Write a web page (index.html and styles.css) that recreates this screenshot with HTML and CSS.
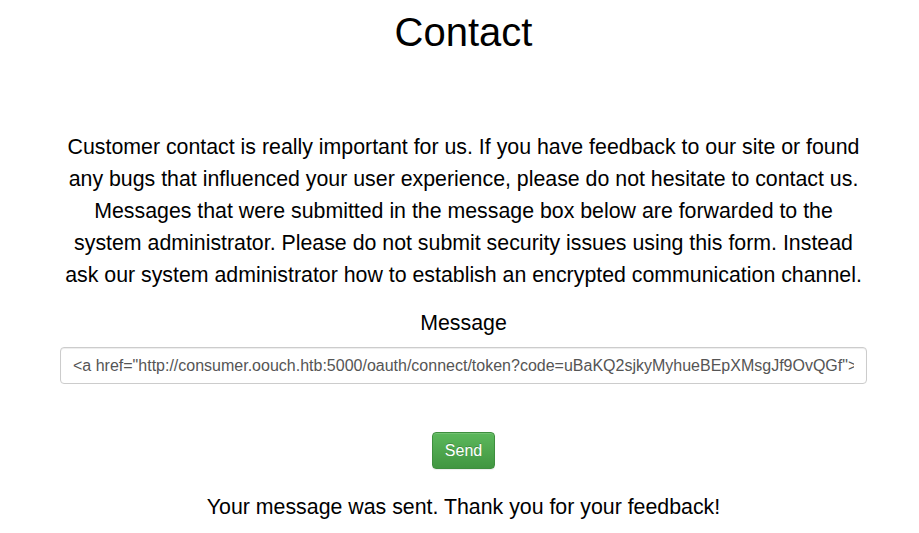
FILE: index.html
```html
<!DOCTYPE html>
<html lang="en">
<head>
<meta charset="utf-8">
<title>Contact</title>
<link rel="stylesheet" href="styles.css">
</head>
<body>
<div class="page">
  <h1 class="title">Contact</h1>
  <p class="intro">Customer contact is really important for us. If you have feedback to our site or found any bugs that influenced your user experience, please do not hesitate to contact us. Messages that were submitted in the message box below are forwarded to the system administrator. Please do not submit security issues using this form. Instead ask our system administrator how to establish an encrypted communication channel.</p>
  <form class="form">
    <label class="label" for="msg">Message</label>
    <input class="field" id="msg" type="text" value="&lt;a href=&quot;http://consumer.oouch.htb:5000/oauth/connect/token?code=uBaKQ2sjkyMyhueBEpXMsgJf9OvQGf&quot;&gt;">
    <button class="btn" type="button">Send</button>
  </form>
  <p class="status">Your message was sent. Thank you for your feedback!</p>
</div>
</body>
</html>
```
FILE: styles.css
```css
html, body {
  margin: 0;
  padding: 0;
  background: #fff;
}
body {
  font-family: "Liberation Sans", Arial, sans-serif;
  color: #000;
}
.page {
  padding: 0 0 0 8px;
  display: flex;
  flex-direction: column;
  align-items: center;
}
.title {
  margin: 9px 0 0;
  font-size: 40px;
  line-height: 46px;
  font-weight: normal;
}
.intro {
  margin: 76px 0 0;
  width: 807px;
  font-size: 21.333px;
  line-height: 32px;
  text-align: center;
}
.form {
  display: flex;
  flex-direction: column;
  align-items: center;
  width: 807px;
}
.label {
  margin-top: 20px;
  font-size: 21.333px;
  line-height: 24px;
}
.field {
  box-sizing: border-box;
  margin-top: 12px;
  width: 807px;
  height: 37px;
  padding: 6px 12px;
  border: 1px solid #ccc;
  border-radius: 4px;
  box-shadow: inset 0 1px 1px rgba(0, 0, 0, .075);
  font-family: "Liberation Sans", Arial, sans-serif;
  font-size: 16px;
  color: #555;
  background: #fff;
}
.btn {
  box-sizing: border-box;
  margin-top: 48px;
  height: 37px;
  padding: 6px 12px;
  font-family: "Liberation Sans", Arial, sans-serif;
  font-size: 16px;
  line-height: 23px;
  color: #fff;
  border: 1px solid #3e8f3e;
  border-radius: 4px;
  background: linear-gradient(to bottom, #5cb85c 0, #419641 100%);
  text-shadow: 0 -1px 0 rgba(0, 0, 0, .2);
  box-shadow: inset 0 1px 0 rgba(255, 255, 255, .15), 0 1px 1px rgba(0, 0, 0, .075);
}
.status {
  margin: 26px 0 0;
  font-size: 21.333px;
  line-height: 24px;
}
```
